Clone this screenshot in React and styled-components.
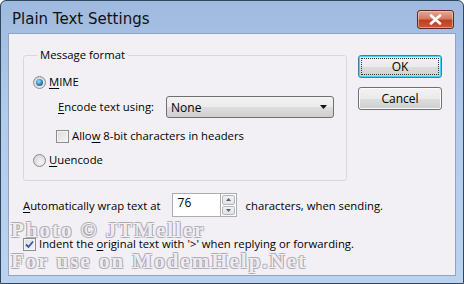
import React from 'react';
import styled, { createGlobalStyle } from 'styled-components';

const Global = createGlobalStyle`
  html, body { margin: 0; padding: 0; background: #ffffff; }
  body { font-family: 'Open Sans', 'Noto Sans', sans-serif; font-size: 11.3px; color: #000; }
`;

const Window = styled.div`
  position: relative;
  width: 464px;
  height: 284px;
  box-sizing: border-box;
  border: 1px solid #31465f;
  border-radius: 6px 6px 0 0;
  background: linear-gradient(180deg, #9fbadf 0%, #b3cbea 40%, #bcd3ef 100%);
  display: flex;
  flex-direction: column;
  overflow: hidden;
`;

const TitleBar = styled.div`
  height: 32px;
  display: flex;
  align-items: flex-start;
  justify-content: space-between;
  padding: 0 9px 0 11px;
  flex-shrink: 0;
`;

const Title = styled.div`
  font-family: 'DejaVu Sans', sans-serif;
  font-size: 15px;
  line-height: 18px;
  color: #101010;
  margin-top: 9px;
`;

const CloseButton = styled.div`
  width: 37px;
  height: 19px;
  margin-top: 9px;
  border: 1px solid #5b2a24;
  border-radius: 3px;
  box-sizing: border-box;
  background: linear-gradient(180deg, #e4a894 0%, #d47a62 45%, #bf3f24 55%, #c9583a 100%);
  box-shadow: inset 0 0 0 1px rgba(255, 220, 200, 0.5);
  display: flex;
  align-items: center;
  justify-content: center;
`;

const Client = styled.div`
  position: relative;
  flex: 1;
  margin: 0 7px 7px 7px;
  background: #f3f0f5;
  border: 1px solid #8ea6c6;
  display: flex;
  flex-direction: column;
  padding: 14px 0 0 14px;
`;

const TopRow = styled.div`
  display: flex;
  align-items: flex-start;
`;

const Group = styled.fieldset`
  width: 324px;
  height: 133px;
  box-sizing: border-box;
  margin: 0;
  padding: 6px 0 0 9px;
  border: 1px solid #d5d9de;
  border-radius: 3px;
  display: flex;
  flex-direction: column;
`;

const Legend = styled.legend`
  padding: 0 3px;
  margin-left: 4px;
  line-height: 14px;
`;

const Row = styled.div`
  display: flex;
  align-items: center;
  height: ${p => p.h || 16}px;
  margin-left: ${p => p.indent || 0}px;
  margin-top: ${p => p.mt || 0}px;
`;

const Label = styled.span`
  margin-left: ${p => p.ml || 3}px;
  white-space: nowrap;
  line-height: 14px;
`;

const Key = styled.span`
  text-decoration: underline;
  text-underline-offset: 2px;
`;

const Radio = styled.span`
  width: 13px;
  height: 13px;
  box-sizing: border-box;
  border-radius: 50%;
  border: 1px solid #8b8c8d;
  background: radial-gradient(circle at 60% 65%, #f6f6f6 0%, #dcdcdc 60%, #c9c9c9 100%);
  display: flex;
  align-items: center;
  justify-content: center;
  flex-shrink: 0;
  &::after {
    content: '';
    display: ${p => (p.checked ? 'block' : 'none')};
    width: 7px;
    height: 7px;
    border-radius: 50%;
    background: radial-gradient(circle at 40% 35%, #a6d9f7 0%, #2d7ec4 55%, #0c3f82 100%);
  }
`;

const Check = styled.span`
  width: 13px;
  height: 13px;
  box-sizing: border-box;
  border: 1px solid #8b8c8d;
  background: linear-gradient(135deg, #dcdcdc 0%, #f4f4f4 100%);
  box-shadow: inset 0 0 0 1px #f4f4f4;
  display: flex;
  align-items: center;
  justify-content: center;
  flex-shrink: 0;
`;

const Select = styled.div`
  width: 168px;
  height: 22px;
  box-sizing: border-box;
  margin-left: ${p => p.ml || 0}px;
  border: 1px solid #707070;
  border-radius: 3px;
  background: linear-gradient(180deg, #f2f2f2 0%, #ebebeb 50%, #dddddd 51%, #cfcfcf 100%);
  display: flex;
  align-items: center;
  justify-content: space-between;
  padding: 0 6px 0 4px;
  font-size: 12px;
`;

const Buttons = styled.div`
  display: flex;
  flex-direction: column;
  gap: 9px;
  margin-left: 11px;
  margin-top: 7px;
`;

const Button = styled.div`
  width: 84px;
  height: 23px;
  box-sizing: border-box;
  border: 1px solid ${p => (p.primary ? '#3c7fb1' : '#707070')};
  border-radius: 3px;
  background: linear-gradient(180deg, #f2f2f2 0%, #ebebeb 50%, #dddddd 51%, #cfcfcf 100%);
  box-shadow: inset 0 0 0 1px ${p => (p.primary ? '#48d0fb' : '#fcfcfc')};
  display: flex;
  align-items: center;
  justify-content: center;
  position: relative;
  font-size: 12px;
  &::after {
    content: '';
    display: ${p => (p.primary ? 'block' : 'none')};
    position: absolute;
    inset: 2px;
    border: 1px dotted #333;
  }
`;

const WrapRow = styled.div`
  display: flex;
  align-items: center;
  height: 24px;
  margin-top: 12px;
`;

const Spin = styled.div`
  display: flex;
  width: 65px;
  height: 24px;
  margin: 0 9px 0 11px;
`;

const SpinInput = styled.div`
  flex: 1;
  background: #fff;
  border: 1px solid #abadb3;
  border-right: none;
  padding: 1px 0 0 5px;
  line-height: 16px;
  font-size: 12px;
`;

const SpinButtons = styled.div`
  width: 17px;
  display: flex;
  flex-direction: column;
  border: 1px solid #abadb3;
  box-sizing: border-box;
  padding: 1px;
  gap: 1px;
  background: #fff;
`;

const SpinBtn = styled.div`
  flex: 1;
  border: 1px solid #b3b7bd;
  border-radius: 2px;
  background: linear-gradient(180deg, #f3f3f3 0%, #e2e2e2 100%);
  display: flex;
  align-items: center;
  justify-content: center;
`;

const IndentRow = styled.div`
  display: flex;
  align-items: center;
  height: 16px;
  margin-top: 19px;
`;

const Watermark = styled.div`
  position: absolute;
  left: 2px;
  top: ${p => p.top}px;
  font-family: 'Liberation Serif', serif;
  font-weight: bold;
  font-size: 21px;
  line-height: 16px;
  letter-spacing: 2px;
  color: rgba(252, 250, 254, 0.85);
  text-shadow: -1px -1px 0 rgba(165, 162, 172, 0.7), 1px -1px 0 rgba(165, 162, 172, 0.7),
    -1px 1px 0 rgba(165, 162, 172, 0.7), 1px 1px 0 rgba(165, 162, 172, 0.7);
  white-space: nowrap;
  pointer-events: none;
`;

const Tri = ({ up }) => (
  <svg width="5" height="3" viewBox="0 0 5 3">
    <path d={up ? 'M0 3 L2.5 0 L5 3Z' : 'M0 0 L2.5 3 L5 0Z'} fill="#4d6185" />
  </svg>
);

const Arrow = () => (
  <svg width="7" height="4" viewBox="0 0 7 4">
    <path d="M0 0 L3.5 4 L7 0Z" fill="#111" />
  </svg>
);

const Tick = () => (
  <svg width="9" height="9" viewBox="0 0 9 9">
    <path d="M1 4.5 L3.5 7 L8 1.5" fill="none" stroke="#3a56a0" strokeWidth="1.8" />
  </svg>
);

const App = () => (
  <>
    <Global />
    <Window>
      <TitleBar>
        <Title>Plain Text Settings</Title>
        <CloseButton>
          <svg width="13" height="11" viewBox="0 0 13 11">
            <path d="M2 1.5 L11 9.5 M11 1.5 L2 9.5" stroke="#fff" strokeWidth="2.6" strokeLinecap="round" />
          </svg>
        </CloseButton>
      </TitleBar>
      <Client>
        <TopRow>
          <Group>
            <Legend>Message format</Legend>
            <Row h={16} mt={6}>
              <Radio checked />
              <Label>
                <Key>M</Key>IME
              </Label>
            </Row>
            <Row h={22} mt={6} indent={22}>
              <Label ml={0}>
                <Key>E</Key>ncode text using:
              </Label>
              <Select ml={12}>
                <span>None</span>
                <Arrow />
              </Select>
            </Row>
            <Row h={16} mt={10} indent={23}>
              <Check />
              <Label>
                Allo<Key>w</Key> 8-bit characters in headers
              </Label>
            </Row>
            <Row h={16} mt={8}>
              <Radio />
              <Label>
                <Key>U</Key>uencode
              </Label>
            </Row>
          </Group>
          <Buttons>
            <Button primary>OK</Button>
            <Button>Cancel</Button>
          </Buttons>
        </TopRow>
        <WrapRow>
          <span>
            <Key>A</Key>utomatically wrap text at
          </span>
          <Spin>
            <SpinInput>76</SpinInput>
            <SpinButtons>
              <SpinBtn>
                <Tri up />
              </SpinBtn>
              <SpinBtn>
                <Tri />
              </SpinBtn>
            </SpinButtons>
          </Spin>
          <span>characters, when sending.</span>
        </WrapRow>
        <IndentRow>
          <Check>
            <Tick />
          </Check>
          <Label>
            Indent the <Key>o</Key>riginal text with '&gt;' when replying or forwarding.
          </Label>
        </IndentRow>
        <Watermark top={188}>Photo © JTMeller</Watermark>
        <Watermark top={219}>For use on ModemHelp.Net</Watermark>
      </Client>
    </Window>
  </>
);

export default App;
